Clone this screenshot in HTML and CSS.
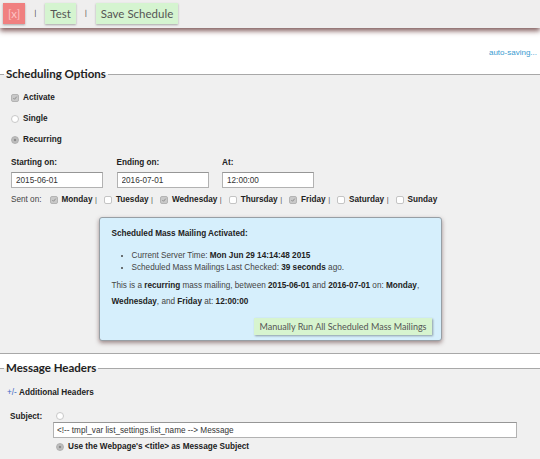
FILE: index.html
```html
<!DOCTYPE html>
<html lang="en">
<head>
<meta charset="utf-8">
<title>Mass Mailing Schedule</title>
<link rel="stylesheet" href="styles.css">
</head>
<body>
<div class="toolbar">
  <button class="btn btn-close" type="button">[x]</button>
  <span class="bar">|</span>
  <button class="btn btn-go" type="button">Test</button>
  <span class="bar">|</span>
  <button class="btn btn-go" type="button">Save Schedule</button>
</div>

<div class="status"><a class="autosave" href="#">auto-saving...</a></div>

<fieldset class="panel">
  <legend>Scheduling Options</legend>
  <div class="panel-body sched">
    <div class="opt"><span class="cb on"><svg viewBox="0 0 8 8"><path d="M1.8 4.1 3.4 5.7 6.3 2.2"/></svg></span>Activate</div>
    <div class="opt"><span class="rd"></span>Single</div>
    <div class="opt"><span class="rd on"></span>Recurring</div>

    <div class="dates">
      <div class="date-col"><span class="date-label">Starting on:</span><input class="field date-field" type="text" value="2015-06-01"></div>
      <div class="date-col"><span class="date-label">Ending on:</span><input class="field date-field" type="text" value="2016-07-01"></div>
      <div class="date-col"><span class="date-label">At:</span><input class="field date-field" type="text" value="12:00:00"></div>
    </div>

    <div class="days">
      <span class="days-label">Sent on:</span>
      <span class="day"><span class="cb on"><svg viewBox="0 0 8 8"><path d="M1.8 4.1 3.4 5.7 6.3 2.2"/></svg></span><b>Monday</b></span><span class="sep">|</span>
      <span class="day"><span class="cb"></span><b>Tuesday</b></span><span class="sep">|</span>
      <span class="day"><span class="cb on"><svg viewBox="0 0 8 8"><path d="M1.8 4.1 3.4 5.7 6.3 2.2"/></svg></span><b>Wednesday</b></span><span class="sep">|</span>
      <span class="day"><span class="cb"></span><b>Thursday</b></span><span class="sep">|</span>
      <span class="day"><span class="cb on"><svg viewBox="0 0 8 8"><path d="M1.8 4.1 3.4 5.7 6.3 2.2"/></svg></span><b>Friday</b></span><span class="sep">|</span>
      <span class="day"><span class="cb"></span><b>Saturday</b></span><span class="sep">|</span>
      <span class="day"><span class="cb"></span><b>Sunday</b></span>
    </div>

    <div class="notice">
      <div class="notice-title">Scheduled Mass Mailing Activated:</div>
      <ul class="notice-list">
        <li>Current Server Time: <b>Mon Jun 29 14:14:48 2015</b></li>
        <li>Scheduled Mass Mailings Last Checked: <b>39 seconds</b> ago.</li>
      </ul>
      <p class="notice-text">This is a <b>recurring</b> mass mailing, between <b>2015-06-01</b> and <b>2016-07-01</b> on: <b>Monday</b>, <b>Wednesday</b>, and <b>Friday</b> at: <b>12:00:00</b></p>
      <div class="notice-actions"><button class="btn-run" type="button">Manually Run All Scheduled Mass Mailings</button></div>
    </div>
  </div>
</fieldset>

<fieldset class="panel panel-headers">
  <legend>Message Headers</legend>
  <div class="panel-body headers">
    <div class="toggle"><a class="toggle-link" href="#">+/-</a> <b>Additional Headers</b></div>
    <div class="subject">
      <span class="subject-label">Subject:</span>
      <div class="subject-opts">
        <span class="rd rd-top"></span>
        <input class="field subject-field" type="text" value="<!-- tmpl_var list_settings.list_name --> Message">
        <div class="subject-alt"><span class="rd on"></span><b>Use the Webpage's &lt;title&gt; as Message Subject</b></div>
      </div>
    </div>
  </div>
</fieldset>
</body>
</html>
```

FILE: styles.css
```css
* { box-sizing: border-box; }

body {
  margin: 0;
  background: #ffffff;
  font-family: "Liberation Sans", Arial, sans-serif;
  font-size: 8.2px;
  color: #222;
}

/* toolbar */
.toolbar {
  position: relative;
  z-index: 1;
  display: flex;
  align-items: center;
  gap: 9px;
  height: 28px;
  padding: 3px 3px 4px;
  background: #efeeee;
  box-shadow: 0 3px 5px rgba(100, 55, 55, 0.8);
}

.btn {
  height: 21px;
  padding: 0 6px;
  border: 0;
  font-family: Lato, "Open Sans", sans-serif;
  font-size: 11.5px;
  line-height: 21px;
  box-shadow: 0 1px 2px rgba(0, 0, 0, 0.3);
}

.btn-close {
  padding: 0 5px;
  background: #f08080;
  color: #fdc4c4;
}

.btn-go {
  padding: 0 5px;
  background: #d5f4d0;
  color: #555;
}

.bar {
  font-family: Lato, sans-serif;
  font-weight: bold;
  font-size: 6.5px;
  color: #555;
  width: 2px;
  text-align: center;
}

/* status */
.status {
  padding: 20px 3px 9px;
  text-align: right;
  font-size: 8px;
  line-height: 10px;
}

.autosave {
  color: #3a9bd0;
  text-decoration: none;
}

/* panels */
.panel {
  margin: 0;
  padding: 0 0 0 4px;
  min-width: 0;
  border: 0;
  border-top: 1px solid #a8a8a8;
  border-bottom: 1px solid #a8a8a8;
  background: #f0f0f0;
}

.panel legend {
  padding: 0 2px;
  font-family: Lato, "Open Sans", sans-serif;
  font-weight: bold;
  font-size: 11.5px;
  line-height: 14px;
  color: #222;
}

.sched {
  padding: 6px 11px 0 7px;
}

.opt {
  display: flex;
  align-items: center;
  gap: 4px;
  height: 21px;
  font-weight: bold;
}

/* checkbox & radio shapes */
.cb {
  display: inline-flex;
  flex: none;
  width: 8px;
  height: 8px;
  border: 1px solid #c4c4c4;
  border-radius: 2px;
  background: #fff;
}

.cb.on {
  border-color: #b4b4b4;
  background: #c9c9c9;
}

.cb svg {
  width: 100%;
  height: 100%;
  fill: none;
  stroke: #8d8d8d;
  stroke-width: 1.3;
}

.rd {
  display: inline-block;
  flex: none;
  width: 8px;
  height: 8px;
  border: 1px solid #c8c8c8;
  border-radius: 50%;
  background: #fff;
}

.rd.on {
  border-color: #b0b0b0;
  background: radial-gradient(circle, #8c8c8c 0 1.4px, #bdbdbd 1.6px);
}

/* dates */
.dates {
  display: grid;
  grid-template-columns: repeat(3, 105.5px);
  margin-top: 7px;
}

.date-col {
  display: flex;
  flex-direction: column;
  gap: 3px;
}

.date-label {
  font-weight: bold;
  line-height: 12px;
}

.field {
  height: 16px;
  padding: 0 3px;
  border: 1px solid #b2b2b2;
  border-top-color: #969696;
  background: #fff;
  font-family: "Liberation Sans", Arial, sans-serif;
  font-size: 8.2px;
  color: #333;
  outline: none;
}

.date-field {
  width: 92px;
  padding-left: 4px;
}

/* days */
.days {
  display: flex;
  align-items: center;
  margin-top: 6px;
  line-height: 12px;
}

.days-label {
  color: #444;
  margin-right: 8px;
}

.day {
  display: inline-flex;
  align-items: center;
  gap: 4px;
}

.sep {
  margin: 0 7px 0 2.5px;
  color: #555;
  font-size: 7.5px;
}

/* notice box */
.notice {
  width: 343px;
  margin: 11px auto 12px;
  padding: 10px 9px 5px 12px;
  border: 1px solid #979fa5;
  border-radius: 3px;
  background: #d6effc;
  box-shadow: 0 2px 4px rgba(90, 55, 55, 0.55);
  color: #444;
}

.notice b { color: #222; }

.notice-title {
  font-weight: bold;
  color: #222;
  line-height: 12px;
}

.notice-list {
  margin: 10px 0 0;
  padding-left: 20px;
  line-height: 11.5px;
}

.notice-text {
  margin: 5px 0 0;
  line-height: 16px;
}

.notice-actions {
  margin-top: 8px;
  text-align: right;
}

.btn-run {
  height: 17px;
  padding: 0 5px;
  border: 0;
  background: #d7f4cf;
  color: #555;
  font-family: Lato, "Open Sans", sans-serif;
  font-size: 9px;
  line-height: 17px;
  box-shadow: 1px 1px 2px rgba(0, 0, 0, 0.35);
}

/* headers panel */
.panel-headers {
  margin-top: 7px;
}

.headers {
  padding: 12px 0 24px 3px;
}

.toggle {
  line-height: 12px;
}

.toggle-link {
  color: #3b66c4;
  text-decoration: none;
}

.subject {
  display: flex;
  align-items: flex-start;
  margin-top: 12px;
  padding-left: 3px;
}

.subject-label {
  width: 43px;
  flex: none;
  font-weight: bold;
  line-height: 12px;
}

.subject-opts {
  display: flex;
  flex-direction: column;
  align-items: flex-start;
}

.rd-top {
  margin: 1px 0 0 3px;
}

.subject-field {
  width: 464px;
  margin-top: 2px;
}

.subject-alt {
  display: flex;
  align-items: center;
  gap: 4px;
  height: 13px;
  margin-top: 2px;
  padding-left: 3px;
}
```
